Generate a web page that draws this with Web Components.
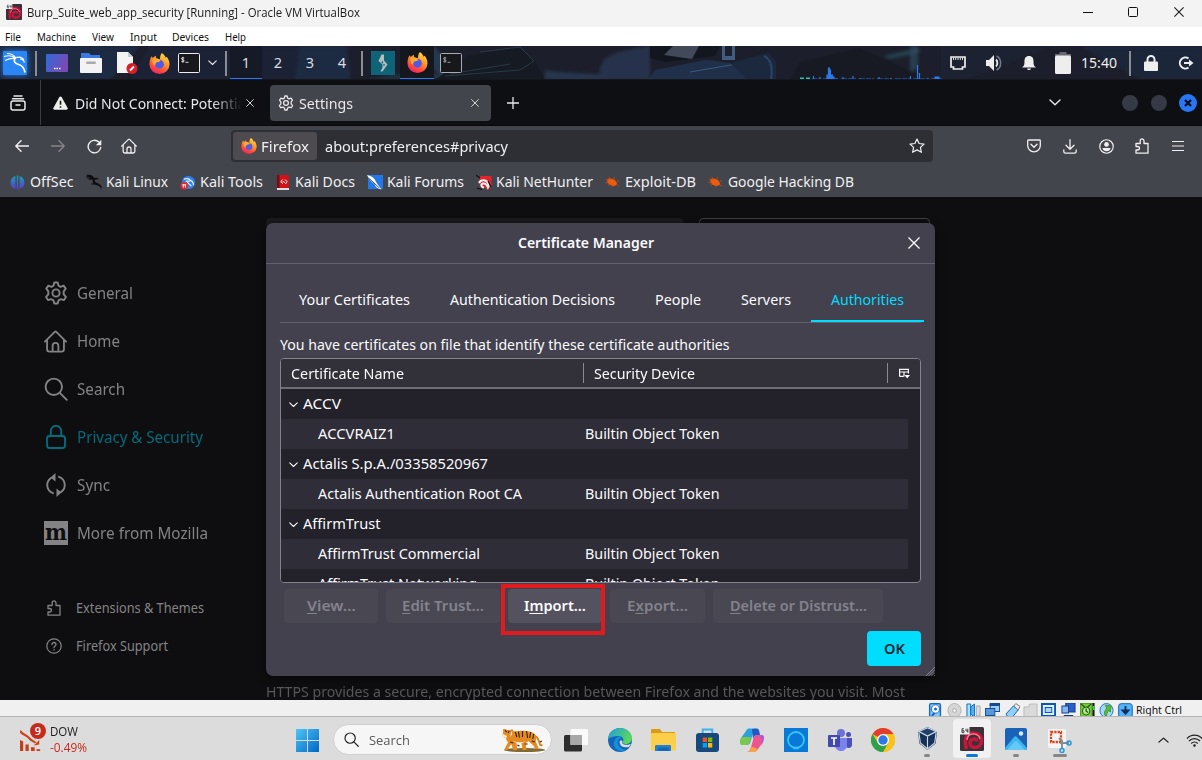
<!DOCTYPE html>
<html lang="en">
<head>
<meta charset="utf-8">
<title>Burp_Suite_web_app_security [Running] - Oracle VM VirtualBox</title>
<style>
html,body{margin:0;height:100%;overflow:hidden;background:#0e0e10}
body{width:1202px;height:760px;font-family:"Noto Sans","Open Sans",sans-serif;font-size:15px}
</style>
</head>
<body>
<vm-window></vm-window>
<script>
const define = (tag, css, html) => {
  const t = document.createElement('template');
  t.innerHTML = `<style>*{box-sizing:border-box}:host{display:block;box-sizing:border-box}${css}</style>${html}`;
  customElements.define(tag, class extends HTMLElement {
    constructor(){ super(); this.attachShadow({mode:'open'}).append(t.content.cloneNode(true)); }
  });
};

/* Text run set to a given measure; --dy nudges its baseline. */
customElements.define('fit-text', class extends HTMLElement {
  constructor(){
    super();
    this.attachShadow({mode:'open'}).innerHTML =
      '<style>:host{display:block;white-space:nowrap;flex:none}span{display:inline-block;transform-origin:0 50%}</style><span><slot></slot></span>';
  }
  connectedCallback(){
    const w = parseFloat(this.getAttribute('w'));
    const s = this.shadowRoot.querySelector('span');
    this.style.width = w + 'px';
    const n = s.getBoundingClientRect().width;
    if (n) s.style.transform = `translateY(var(--dy,0px)) scaleX(${(w / n).toFixed(4)})`;
  }
});

const st = 'fill="none" stroke="currentColor" stroke-linecap="round" stroke-linejoin="round"';
const ICONS = {
 vmlogo:['0 0 24 24','<rect width="24" height="24" rx="1.5" fill="#3a3238"/><path d="M6.500 22C3.500 12 6.500 6 13 6c5.500 0 8.500 3.500 8.500 7.500 0 4.500-3 7-6.500 7-3.500 0-5-2.200-5-4.500 0-2.500 2-4 4-4 1.800 0 2.800 1 2.800 2.500" fill="none" stroke="#c8153c" stroke-width="3.600"/><path d="M7 13c.5-4.500 3-6.500 7-6 3 .3 5.500 2.500 6 5" fill="none" stroke="#ff6d88" stroke-width="1.500"/><rect width="9.500" height="7.500" fill="#f2f2f2"/><path d="M3.800 1.700H2v4h2v-2H2M6 1.700v2.300h2.200M7.800 1.700v4" stroke="#333" fill="none" stroke-width=".9"/>'],
 min:['0 0 10 10','<path d="M0 5.500h10" stroke="#111"/>'],
 max:['0 0 10 10','<rect x=".5" y=".5" width="9" height="9" rx="1" fill="none" stroke="#111"/>'],
 close:['0 0 10 10','<path d="M.4.4l9.200 9.200M9.600.4L.4 9.600" stroke="currentColor" stroke-width="1.100" fill="none"/>'],
 kali:['0 0 24 24','<rect width="24" height="24" rx="1" fill="#2a86f5"/><path d="M1 5.500c4-1.200 8-1 11 1.500M2 9.500c4-2 7-2.500 10-2M4 2.500c4 0 7 1.500 9 4.500M12 7c4-1.500 7.500-.5 9 2.500M17 8c2 0 3.500 1 4.500 3.500" fill="none" stroke="#fff" stroke-width="1.200"/><path d="M12.500 6.500c-2.500 3.500-1 6 3 7 3.500.8 5.500 3 6.500 8" fill="none" stroke="#fff" stroke-width="1.700"/>'],
 desk:['0 0 22 18','<defs><linearGradient id="a" x2="1" y2=".4"><stop stop-color="#2f6bd8"/><stop offset="1" stop-color="#7a4ab5"/></linearGradient></defs><rect width="22" height="18" rx="1" fill="url(#a)"/><path d="M8 14.500h1.500M10.500 14.500h1.500M13 14.500h1.500" stroke="#fff" stroke-width="1.500"/>'],
 folder:['0 0 22 20','<path d="M1 0h8l2 2h9v7H1z" fill="#3b78e0"/><rect y="5" width="22" height="15" rx="1" fill="#f3f3f3"/><rect x="6" y="8.500" width="10" height="2.500" rx="1.200" fill="#aaa"/>'],
 doc:['0 0 21 22','<path d="M0 0h11l5 5v16H0z" fill="#f4f4f4"/><path d="M11 0v5h5" fill="#ccc"/><circle cx="15" cy="16.500" r="5.500" fill="#d3202a"/><path d="M13 18.500l4-4" stroke="#fff" stroke-width="1.800"/>'],
 firefox:['0 0 22 22','<defs><linearGradient id="f" x1=".8" y1="0" x2=".3" y2="1"><stop stop-color="#ffe14a"/><stop offset=".4" stop-color="#ff9a28"/><stop offset=".75" stop-color="#ff4a3a"/><stop offset="1" stop-color="#e8206e"/></linearGradient></defs><path d="M13.500 0c2.500 1.500 3.500 3.500 3.800 5l1.200-1c2 2.500 3 5 3 8a10.500 10 0 0 1-21 0C.5 8 1.500 5 3 3.500l1 2C5 4 6 4 7 3l.5 2.500 4 1C11.500 4 12 1.500 13.500 0z" fill="url(#f)"/><circle cx="11" cy="11.800" r="4.600" fill="#4f5be6"/><path d="M4 6.500c3-1.500 6-1 8 1.500-1 1.500-3 1-4.500 2-1.500 1.300-.5 3.500-2 3-2-1.500-2-4.500-1.500-6.500z" fill="#ffab30"/>'],
 term:['0 0 22 20','<rect x=".5" y=".5" width="21" height="19" rx="1" fill="#17181c" stroke="currentColor"/><path d="M6.200 5.200c-1.500-.9-2.700-.4-2.700.5 0 1.400 2.700.9 2.700 2.200 0 1-1.600 1.200-2.800.5M4.900 3.800v5.800M7.500 9.300h3" fill="none" stroke="currentColor" stroke-width=".9"/>'],
 chev:['0 0 12 7',`<path d="M1 1l5 4.700L11 1" ${st} stroke-width="1.400"/>`],
 burp:['0 0 24 24','<rect width="24" height="24" fill="#0f6477"/><path d="M10.500 3.500h2.500v6l3.500 4-5 7H9.500l2-4v-3L7.500 10z" fill="#b4bdc0"/><path d="M11 9.500l1.500 2.500-2 .5zM13 15.500l-1-2 2-.5z" fill="#0f6477"/>'],
 eth:['0 0 16 14','<path d="M1 1h14v10h-2.500v2h-9v-2H1z" fill="none" stroke="#eee" stroke-width="1.700"/><path d="M3.500 1v3M5.700 1v3M8 1v3M10.300 1v3M12.500 1v3" stroke="#ddd"/>'],
 vol:['0 0 18 18','<path d="M1 6h3l5-5v16l-5-5H1z" fill="#eee"/><path d="M11 5.500c1.800 1.500 1.800 5.500 0 7" stroke="#eee" fill="none" stroke-width="1.800"/><path d="M11.500 2c5.500 2.500 5.500 11.500 0 14" stroke="#777b84" fill="none" stroke-width="1.500"/>'],
 bell:['0 0 14 16','<path d="M7 1c3.500 0 4.500 2.500 4.500 5 0 4 .5 5 2.500 6.500H0C2 11 2.500 10 2.500 6c0-2.500 1-5 4.500-5zM5 13.500h4c-.5 2-3.500 2-4 0z" fill="#eee"/>'],
 batt:['0 0 16 22','<path d="M4.500 0h7v2H16v2H0V2h4.500z" fill="#666a72"/><rect y="3.500" width="16" height="18.500" rx="1.500" fill="#eee"/>'],
 lock:['0 0 14 16','<rect y="6.500" width="14" height="9.500" rx="1" fill="#eee"/><path d="M3.500 7V4.500a3.500 3.500 0 0 1 7 0V7" fill="none" stroke="#eee" stroke-width="2"/>'],
 logout:['0 0 16 14','<path d="M10.500 2.500A5.500 5.500 0 1 0 10.500 11.500M6 7h7" fill="none" stroke="#eee" stroke-width="2"/><path d="M11 3.500L15.500 7 11 10.500z" fill="#eee"/>'],
 graph:['0 0 142 16','<path d="M0 14.500h4M6 14.500h4" stroke="#20c8b8" stroke-width="2"/><path d="M12 15h130" stroke="#2a6ee0" stroke-width="1" stroke-dasharray="5 1 2 3 6 1"/><path d="M13.500 16v-4M20 16v-3M27 16v-5h1.500V4h1v2h1v5h2v2h1.500v3zM36 16v-2M43 16v-3M53 16v-4M60 16v-2M79 16v-3M91 16v-2M110.500 16v-4M117.500 16V1M119.500 16V9M128 16v-2M135 16v-3h4v3" stroke="#2a7bea" fill="#2a7bea" stroke-width="1.200"/>'],
 box:['0 0 16 16',`<path d="M4 1h8M2.500 3.700h11" ${st} stroke-width="1.500"/><rect x="1" y="6" width="14" height="9" rx="2" ${st} stroke-width="1.500"/><path d="M6 10h4" ${st} stroke-width="1.500"/>`],
 warn:['0 0 16 15','<path d="M8 .5c.6 0 1 .3 1.300.8l6.300 11.500c.5 1-.1 1.900-1.200 1.900H1.600C.5 14.700-.1 13.800.4 12.800L6.700 1.300C7 .8 7.400.5 8 .5z" fill="#eee"/><path d="M8 5v4.500M8 11v1.600" stroke="#15161a" stroke-width="1.700"/>'],
 gear:['0 0 24 24',`<path d="M10.300 1.500h3.400l.8 3.200 2 1.100 3.100-1.200 2.100 3-2 2.800v2.900l2.200 2.600-1.900 3.200-3.400-.9-2.100 1.200-.8 3.100h-3.400l-.8-3.100-2.100-1.200-3.400.9-1.900-3.200 2.200-2.600v-2.900l-2-2.800 2.100-3 3.100 1.200 2-1.100z" ${st} stroke-width="1.900"/><circle cx="12" cy="12" r="3.600" ${st} stroke-width="1.900"/>`],
 plus:['0 0 12 12','<path d="M6 0v12M0 6h12" stroke="currentColor" stroke-width="1.300"/>'],
 back:['0 0 14 12',`<path d="M13.500 6H1M6 .8L.8 6 6 11.200" ${st} stroke-width="1.400"/>`],
 fwd:['0 0 14 12',`<path d="M.5 6H13M8 .8L13.200 6 8 11.200" ${st} stroke-width="1.400"/>`],
 reload:['0 0 15 15',`<path d="M13.700 8.500A6.300 6.300 0 1 1 11.800 3" ${st} stroke-width="1.400"/><path d="M14.300.8v5.500H8.800z" fill="currentColor"/>`],
 home:['0 0 24 24',`<path d="M1 12.200L11.200 2c.5-.5 1.100-.5 1.600 0L23 12.200M3.200 10.500V20c0 1.600.8 2.500 2.500 2.500h12.600c1.700 0 2.500-.9 2.500-2.500v-9.500M9 22v-5.500c0-4 6-4 6 0V22" ${st} stroke-width="1.900"/>`],
 star:['0 0 16 16',`<path d="M8 1l2.100 4.500 4.900.6-3.600 3.300 1 4.900L8 11.900l-4.400 2.400 1-4.900L1 6.100l4.900-.6z" ${st} stroke-width="1.200"/>`],
 pocket:['0 0 14 14',`<path d="M1.500 1h11c.5 0 .8.300.8.800V6.500a6.300 6.300 0 0 1-12.600 0V1.800c0-.5.300-.8.800-.8z" ${st} stroke-width="1.300"/><path d="M4 5.300l3 2.900 3-2.900" ${st} stroke-width="1.400"/>`],
 down:['0 0 14 15',`<path d="M7 .7v9M3 6.200l4 4 4-4M.8 11v1.500c0 1 .6 1.700 1.700 1.700h9c1.100 0 1.700-.7 1.700-1.700V11" ${st} stroke-width="1.300"/>`],
 account:['0 0 16 16','<circle cx="8" cy="8" r="7.200" fill="none" stroke="currentColor" stroke-width="1.300"/><circle cx="8" cy="5.800" r="2.500" fill="currentColor"/><path d="M3.800 9.500h8.400c0 2-1.500 3.500-4.200 3.500S3.800 11.500 3.800 9.500z" fill="currentColor"/>'],
 puzzle:['0 0 14 16',`<path d="M1 15.200h12V5.500H9V3c0-2.800-3.800-2.800-3.800 0v2.500H1v3h1.500c2.600 0 2.600 3.500 0 3.500H1z" ${st} stroke-width="1.300"/>`],
 menu:['0 0 12 12','<path d="M0 1.500h12M0 6h12M0 10.500h12" stroke="currentColor" stroke-width="1.200"/>'],
 offsec:['0 0 16 16','<defs><linearGradient id="o" x2="0" y2="1"><stop stop-color="#18a0b0"/><stop offset="1" stop-color="#5a3bd6"/></linearGradient></defs><path d="M5.800 1v13.800A7.200 7.200 0 0 1 5.800 1zM10.200 1v13.800A7.200 7.200 0 0 0 10.200 1zM7.200.5h1.600v15H7.200z" fill="url(#o)"/>'],
 dragon:['0 0 16 16','<path d="M0 1c4-1 7 0 8 3 2-.8 4-.3 5 1.500-2-.5-3.500-.3-4.500.8.3 2.200 2 2.300 4 3.200 2 1 3 3 3 6-1.500-3-3-4-5-4.500C7 10.500 6 8 7 5.500L2 6l3-2z" fill="#0c0c0e"/><path d="M1 4h5M0 2.500l6 1M5 10h4M13 11l3 2" stroke="#0c0c0e" stroke-width=".9"/>'],
 tools:['0 0 16 16','<circle cx="9" cy="8" r="7" fill="#2d82ee"/><path d="M4 4.500c4-1.500 6-.5 7.500 1.500 2 .5 2.500 2 3 5M6 7c2-1 4 0 5-1M8 7c0 3 3 2.500 4 5" fill="none" stroke="#e9f2ff" stroke-width="1.200"/><circle cx="4.500" cy="11.500" r="4" fill="#e02a36"/><path d="M3.500 9.800v3.500M5.700 9.800v3.500M2.500 10.500h4" stroke="#fff" fill="none"/>'],
 docs:['0 0 12 15','<rect width="12" height="13" rx="1" fill="#d11218"/><rect y="0" width="2.500" height="13" fill="#7c0b12"/><rect y="13" width="12" height="2" fill="#e3dfdf"/><path d="M5.500 4.500L3.800 7 6 8.500M8 4.500L10 6.500 8.500 9M5.800 6.500l2 .8" stroke="#fff" fill="none"/>'],
 forums:['0 0 16 15','<rect x="1" width="15" height="14" fill="#2278ea"/><path d="M0 0c5 1 8 3.500 9 7l5.500 7.500c-4-1-6-2.500-7-5.500C4 7 2 4 0 0z" fill="#fff"/><path d="M1.500 3l11 10" stroke="#333" stroke-width=".9"/>'],
 nethunter:['0 0 16 15','<path d="M4 1h11.500v10L12 15 3 9z" fill="#e4222e"/><path d="M3 8c2-4 8-3.500 9.500 1 .5 1.500.2 2.500-.5 3.500-1-3-3-4.500-5.500-4C4.500 9.500 5 12 8 12.500" fill="none" stroke="#f2f2f2" stroke-width="2"/><path d="M0 0l4 3M1 13l5 1.500M12 6l3 6" stroke="#111" stroke-width="1.200"/>'],
 bug:['0 0 16 12','<ellipse cx="7.500" cy="6.200" rx="5.500" ry="3.300" transform="rotate(22 7.500 6.200)" fill="#ee5a0e"/><path d="M1 3l3 1.500M4 .8l2 3M10 1l-.5 3M13 5h2M12 8.500l3 1.500M3 10l2-2M0 6.500l4 .5M8 11V9" stroke="#c5500f" stroke-width=".8"/>'],
 search:['0 0 24 24',`<circle cx="9.800" cy="9.800" r="8.200" ${st} stroke-width="1.900"/><path d="M15.800 15.800l7 7" ${st} stroke-width="1.900"/>`],
 padlock:['0 0 24 24',`<rect x="3" y="11" width="18" height="12" rx="2.500" ${st} stroke-width="1.900"/><path d="M6.800 11V6a5.200 5.200 0 0 1 10.400 0v5" ${st} stroke-width="1.900"/>`],
 sync:['0 0 24 24',`<path d="M9 20.200A8.600 8.600 0 0 1 7 5M15 3.800A8.600 8.600 0 0 1 17 19" ${st} stroke-width="1.900"/><path d="M11.500 0v8.500L6.500 4.500zM12.500 15.500v8.500l5-4.500z" fill="currentColor"/><path d="M10 4.300c2-.6 3.500-.6 5-.3M14 19.700c-2 .6-3.500.6-5 .3" ${st} stroke-width="1.500" opacity="0"/>`],
 help:['0 0 16 16',`<circle cx="8" cy="8" r="7.200" ${st} stroke-width="1.200"/><path d="M6 6.500c0-2.700 4-2.600 4 0 0 1.500-2 1.500-2 3.200M8 11.700v.2" ${st} stroke-width="1.300"/>`],
 cols:['0 0 11 11','<path d="M.6 8.400v-7h8.800v4M.6 4h8.800M5 4v4.400M.6 8.400h3.900" fill="none" stroke="#fbfbfe" stroke-width="1.200"/><path d="M5.500 7h5.500L8.200 10.500z" fill="#fbfbfe"/>'],
 grip:['0 0 10 10','<path d="M0 10L10 0M3 10L10 3M6 10L10 6M9 10L10 9" stroke="#8e8d97"/>'],
 s1:['0 0 16 14','<rect x="1" y="0" width="13" height="15" rx="2" fill="#1269c8"/><rect x="2.500" y="1.200" width="10" height="13" rx="1" fill="#8dc9f7"/><circle cx="8" cy="6" r="4.200" fill="#fff" stroke="#1269c8"/><circle cx="8" cy="6" r="1.600" fill="#1269c8"/><path d="M4 13l3-3" stroke="#1269c8" stroke-width="2"/>'],
 s2:['0 0 16 14','<circle cx="8" cy="7.500" r="7" fill="#d6d6d6" stroke="#b3b3b3"/><circle cx="8" cy="7.500" r="2" fill="#f2f2f2" stroke="#aaa"/>'],
 s3:['0 0 16 14','<path d="M1 1h4v13H1z" fill="#a5e3ff" stroke="#1269c8"/><path d="M5 4l4-3v13l-4-3z" fill="#4db5f5" stroke="#1269c8"/><path d="M11 3h4v10h-4z" fill="#ddd" stroke="#aaa"/>'],
 s4:['0 0 16 14','<rect x="5.500" y=".5" width="10" height="8" fill="#9ccff5" stroke="#174a91"/><path d="M5 2h11" stroke="#174a91" stroke-width="2"/><rect x=".5" y="5.500" width="10" height="7" fill="#5797de" stroke="#174a91"/><path d="M3 13.500h6" stroke="#174a91"/>'],
 s5:['0 0 16 14','<path d="M9 3l5 4-6 7H3l-2-3z" fill="#8ed0fa" stroke="#1b5faa"/><path d="M9.500 3l2-2.500 4.500 3L14 7z" fill="#eee" stroke="#777"/>'],
 s6:['0 0 16 14','<path d="M1 4h5l1-3h8v13H1z" fill="#dadada" stroke="#bbb"/>'],
 s7:['0 0 16 14','<rect x="1" y="1" width="14" height="12" fill="#dff0ff" stroke="#0d55b0" stroke-width="2"/><rect x="4.500" y="4.500" width="7" height="5" fill="#a9d8fb" stroke="#0d55b0"/>'],
 s8:['0 0 16 14','<rect x="5" y="0" width="10" height="9" fill="#2d5fc9" stroke="#153c8c"/><rect x="1" y="3" width="7" height="7" fill="#8ab6ee" stroke="#153c8c"/><path d="M3 13h10" stroke="#153c8c" stroke-width="2"/>'],
 s9:['0 0 16 14','<rect width="13" height="14" fill="#7cc53e" stroke="#267a1c"/><circle cx="6.500" cy="8" r="4" fill="#b5e58a" stroke="#175910"/><path d="M1 1l4 3M12 1L8 4M6.500 5.500V8l2 1.500" stroke="#175910" fill="none" stroke-width="1.300"/><path d="M14.500 0v14" stroke="#111" stroke-width="2"/><path d="M14.500 3v4" stroke="#3dd33d" stroke-width="2"/>'],
 s10:['0 0 16 14','<circle cx="8" cy="7.500" r="7" fill="#a5d7f7" stroke="#2176c3"/><path d="M7 2l6 1-1 6-2-1.500c-1 2-2 3.500-2 6.500-3-2-3-5 0-8.500z" fill="#5bbb30" stroke="#2b8520" stroke-width=".7"/>'],
 s11:['0 0 16 14','<rect x=".7" y=".7" width="14.500" height="14" rx="2.500" fill="#56b3f5" stroke="#1261b8"/><path d="M8 3v6M5 7.500L8 10.500 11 7.500z" stroke="#0b2f63" fill="#0b2f63" stroke-width="2"/>'],
 stocks:['0 0 24 24','<path d="M0 2c3 5 7 4 10 8 2 3 5 3 7 5" fill="none" stroke="#cf4014" stroke-width="2.300"/><path d="M21 12v5l-6 1z" fill="#cf4014"/><path d="M0 12l3.500 1.500V24H0zM6 17h3.500v7H6zM12 20h4v4h-4zM18 22h4v2h-4z" fill="#c63d17"/>'],
 win:['0 0 24 24','<defs><linearGradient id="w" x2="1" y2="1"><stop stop-color="#4cc6f8"/><stop offset="1" stop-color="#0067c4"/></linearGradient></defs><path d="M0 0h11.500v11.500H0zM12.500 0H24v11.500H12.500zM0 12.500h11.500V24H0zM12.500 12.500H24V24H12.500z" fill="url(#w)"/>'],
 tiger:['0 0 44 25','<ellipse cx="24" cy="23" rx="20" ry="2" fill="#7f6b35"/><path d="M33 9c3 0 4 2 5 5s1 5 3.500 4" fill="none" stroke="#d97c1a" stroke-width="1.800"/><path d="M3 2l2 0 2 1h3l2-1 1 2c4 1 7-1 12 0 5 .5 9 1.500 10 5 1 3-1 5 1 8l2 5h-4c0-4-4-5-6-8l-3 2 1 7h-4l-1-7-5-1 1 8h-4l-2-6-4 6H4l4-8c-2-1-2-3-2-4-3 0-4-3-3-5z" fill="#e58a20"/><path d="M3 7l4 2-1 2-3-1zM12 14l7 1.500 6-1-6 2.500zM11 4l1 3-2 3z" fill="#fff0d6"/><path d="M15 5l1.500 5M18 4.500l1 6M22 4v6M26 4l1 7M30 5l-1 6M33 7l-1 5M10 15l3 1M5 3.500l1.500 1.500M9 4l-1 2M17 18l2 1M39 15l2-1M31 14l3 1M24 17h3" stroke="#33220f" stroke-width="1.100"/>'],
 taskview:['0 0 24 23','<rect x="0" y="6" width="18" height="16.500" rx="1.500" fill="#2d2d2d"/><rect x="6.500" y="0" width="17.500" height="16" rx="1" fill="#fafafa"/><path d="M6.500 6H18v10H6.500z" fill="#a8a8a8"/>'],
 edge:['0 0 24 24','<defs><linearGradient id="e" x2="1" y2=".5"><stop stop-color="#1b9de2"/><stop offset="1" stop-color="#5cd95b"/></linearGradient></defs><circle cx="12" cy="12" r="12" fill="#1266ba"/><path d="M0 12C0 5 5.500 0 12 0s12 4.500 12 10c0 4-3 6-6.500 6-2 0-3.500-.8-2.500-2 1.500-3-1-6-4-6C6 8 1 9 0 12z" fill="url(#e)"/><path d="M12 8c-4 1-6 4-6 8 0 5 6 9 12 6-5-1-9-4-8-9 .3-1.500 1-2.300 3-3z" fill="#1a8ed6"/><path d="M14.500 14c-1.500 2 3 4 8 2l.500 0-2 3c-4 1-9 0-9.500-5 0-1 1-2 3-1z" fill="#dcdcdc"/>'],
 wfolder:['0 0 25 22','<path d="M0 1c0-.6.400-1 1-1h8l2 3h13v6H0z" fill="#dc9a18"/><rect y="4" width="25" height="17.500" rx="1" fill="#fdce49"/><path d="M4 22v-4.500c0-1 .6-1.500 1.500-1.500h13c1 0 1.500.5 1.500 1.500V22h-3v-2H7v2z" fill="#2380d0"/><path d="M7 18.500h11V22H7z" fill="#1468b3"/>'],
 store:['0 0 24 24','<path d="M7 6V1.500h10V6" fill="none" stroke="#3db1ea" stroke-width="2"/><rect y="5" width="24" height="19" rx="3" fill="#17497f"/><path d="M7 9.500h4.500V14H7z" fill="#f05023"/><path d="M12.500 9.500H17V14h-4.500z" fill="#7fbb00"/><path d="M7 15h4.500v4.500H7z" fill="#00a5ef"/><path d="M12.500 15H17v4.500h-4.500z" fill="#ffb902"/>'],
 copilot:['0 0 24 24','<path d="M6 3c1-2 2-2.500 4-2.500h7c-3 0-3.500 3-4.500 6L11 12c-1 4-2 5-5 5H3c-4 0-3-4-2-7z" fill="#2aa0dc"/><path d="M3 9h8l-1 4c-1 3-2 4-4 4H3c-4 0-3-4-2-7z" fill="#7cc84a"/><path d="M18 21c-1 2-2 2.500-4 2.500H7c3 0 3.500-3 4.500-6L13 12c1-4 2-5 5-5h3c4 0 3 4 2 7z" fill="#f0548c"/><path d="M18 21c-1 2-2 2.500-4 2.500H7c3 0 3.500-3 4-5z" fill="#f7a63c"/><path d="M12 1l5-.5c2 0 2.500 3 3 6.500h-3c-2 0-3 1-4 4z" fill="#2458c8"/><path d="M21 7c4 0 3 4 2 7l-2 4c1-5 1-8-2-11z" fill="#a85be0"/>'],
 cortana:['0 0 24 24','<rect width="24" height="24" fill="#0a78d6"/><circle cx="12" cy="12" r="8" fill="none" stroke="#35c6f6" stroke-width="1.800"/><path d="M9.500 20h5" stroke="#35c6f6" stroke-width="2.500"/>'],
 teams:['0 0 24 24','<circle cx="13" cy="5" r="4" fill="#6c72d9"/><circle cx="20.500" cy="6.500" r="2.500" fill="#4a50b5"/><path d="M17 10h7v7c0 3-4 4-6 2z" fill="#4a50b5"/><path d="M7 10h12v7c0 8-12 8-12 0z" fill="#7b83eb"/><rect y="7" width="12" height="12" rx="1" fill="#434aae"/><path d="M3 10h6M6 10v7" stroke="#fff" stroke-width="1.700"/>'],
 chrome:['0 0 24 24','<circle cx="12" cy="12" r="12" fill="#fbc116"/><path d="M12 12L1.600 6A12 12 0 0 1 22.400 6z" fill="#e33b2e"/><path d="M12 6h10.400A12 12 0 0 1 12 24l5-9z" fill="#fbc116"/><path d="M1.600 6A12 12 0 0 0 12 24l5.200-9-5.200 2-5-2z" fill="#2da04e"/><circle cx="12" cy="12" r="6" fill="#fff"/><circle cx="12" cy="12" r="4.700" fill="#2f76e6"/>'],
 vbox:['0 0 22 24','<path d="M11 0l10 4.500-1.500 12L11 23l-8.500-6.500L1 4.500z" fill="#16325a"/><path d="M11 .8l9 3.700L11 9 2 4.500z" fill="#223f6c" stroke="#d5dfec" stroke-width="1.200"/><path d="M11 9.500V22M2 5.500l1.500 10.500L11 22l7.500-6L20 5.500" stroke="#cddae8" fill="none" stroke-width="1.200"/>'],
 photos:['0 0 22 22','<rect width="22" height="22" rx="2" fill="#1a62b8"/><circle cx="16" cy="5.500" r="2.200" fill="#d8edff"/><path d="M0 20L9 9c1-1 2-1 3 0l10 11c0 1-1 2-2 2H2c-1 0-2-1-2-2z" fill="#3cb6ec"/><path d="M2 22L10 13.500c.7-.7 1.300-.7 2 0L20 22z" fill="#64c9f5"/>'],
 snip:['0 0 24 24','<rect width="18" height="19" rx="2" fill="#f4f4f4"/><rect x="3" y="3" width="10" height="10" fill="none" stroke="#d9441a" stroke-width="2.300" stroke-dasharray="2.300 1"/><path d="M11 9l3 3v8M12 14h9" stroke="#8b8d92" stroke-width="2" fill="none"/><circle cx="14" cy="21.500" r="2" fill="none" stroke="#1e9ae0" stroke-width="1.500"/><circle cx="21" cy="14" r="2" fill="none" stroke="#1e9ae0" stroke-width="1.500"/>'],
 wifi:['0 0 17 13','<path d="M1 4.500c4-4.500 11-4.500 15 0M3 7c3-3.300 8-3.300 11 0M5.200 9.500c2-2 4.600-2 6.600 0" fill="none" stroke="#222" stroke-width="1.200"/><circle cx="8.500" cy="11.500" r="1.300" fill="#222"/>']
};
customElements.define('k-icon', class extends HTMLElement {
  connectedCallback(){
    const [vb, body] = ICONS[this.getAttribute('n')];
    const w = this.getAttribute('w'), h = this.getAttribute('h') || w;
    this.attachShadow({mode:'open'}).innerHTML =
      `<style>:host{display:block;flex:none;width:${w}px;height:${h}px}svg{display:block}</style><svg width="${w}" height="${h}" viewBox="${vb}" preserveAspectRatio="none">${body}</svg>`;
  }
});

define('vm-titlebar', `:host{height:27px;background:#f3f3f3;color:#1b1b1b;font:12px "Open Sans","Noto Sans",sans-serif}
 div{display:grid;height:24px;grid-template-columns:21px 1056px 45px 46px 10px;padding-left:6px;align-items:center}`,
 `<div><k-icon n="vmlogo" w="16"></k-icon><fit-text w="333">Burp_Suite_web_app_security [Running] - Oracle VM VirtualBox</fit-text><k-icon n="min" w="10"></k-icon><k-icon n="max" w="10"></k-icon><k-icon n="close" w="10"></k-icon></div>`);

define('vm-menubar', `:host{height:19px;background:#fff;color:#111;font:11.500px "Noto Sans",sans-serif;--dy:-1px}
 div{display:grid;height:20px;grid-template-columns:32px 55px 38px 42px 53px 30px;padding-left:5px;align-items:center}`,
 `<div><fit-text w="16">File</fit-text><fit-text w="39">Machine</fit-text><fit-text w="22">View</fit-text><fit-text w="27">Input</fit-text><fit-text w="37">Devices</fit-text><fit-text w="21">Help</fit-text></div>`);

define('kali-panel', `:host{height:34px;position:relative;background:#1c1f2b;color:#eee;overflow:hidden;border-bottom:1px solid #16171c}
 .wall{position:absolute;inset:0}
 .row{position:relative;display:grid;height:34px;align-items:center;padding-left:3px;
  grid-template-columns:32px 11px 34px 37px 32px 29px 30px 17px 5px 32px 32px 32px 36px 9px 29px 40px 360px 151px 35px 36px 33px 26px 49px 14px 35px 20px}
 i{display:block;width:2px;height:25px;background:#8b8d93}
 .ws{width:32px;height:34px;display:flex;justify-content:center;align-items:center;font:14.500px "Noto Sans",sans-serif;--dy:-1px;padding-bottom:2px;color:#dcdde0}
 .on{background:#161a27;border-bottom:2px solid #2a78f5;padding:0;height:34px}
 .task{width:34px;height:34px;background:#15171e;border-bottom:2px solid #2a78f5;display:flex;align-items:center;justify-content:center}
 .glow{filter:drop-shadow(0 0 3px #2a7cf0)}`,
 `<svg class="wall" width="1202" height="34" viewBox="0 0 1202 34"><defs><filter id="b" x="-5%" width="110%" y="-20%" height="140%"><feGaussianBlur stdDeviation="1.500"/></filter></defs><rect width="1202" height="34" fill="#1c1f2b"/>
 <g filter="url(#b)"><path d="M0 0h140l-30 34H0z" fill="#1f2a42"/><path d="M150 0h200l-10 34H130z" fill="#1c2435"/><path d="M300 0h45q5 15 5 34h-55z" fill="#1f2b43"/><path d="M365 34l60-10 30 10z" fill="#223344"/>
 <path d="M412 0h22l20 24-10 10z" fill="#2a4262" opacity=".7"/></g><path d="M468 10l50-9 17 14 10 19H435z" fill="#161a22"/><path d="M480 6l40-5 14 14-14 9-75 6M450 28l60-10" fill="none" stroke="#2b4350" stroke-width=".8"/>
 <g filter="url(#b)"><path d="M545 24q8 3 100 6v4h-100z" fill="#2c4566" opacity=".6"/><path d="M600 34V22q4-14 28-18l22-4v34z" fill="#27324c"/></g><path d="M650 0h70l-5 10-50 6-15-4z" fill="#12161f"/><path d="M673 0h26l-7 13-28-4z" fill="#424a59"/>
 <path d="M655 24l50-10q50 4 60 20H648z" fill="#20304a"/><path d="M690 26l70-12" stroke="#3c5a7c"/><path d="M722 0h3v10h7V0h3v14h-13z" fill="#405d80"/><path d="M730 17l38-10 8 8v19h-28z" fill="#1b283e"/><path d="M764 10q10 4 7 24" fill="none" stroke="#2d4565" stroke-width="2"/><path d="M790 34l10-18 60-14 70 32z" fill="#181a23"/>
 <g filter="url(#b)"><path d="M884 10l20-5 15-3v5l-30 6z" fill="#24404e"/><path d="M910 0h8v22l-8 4z" fill="#304860" opacity=".7"/><path d="M942 0h110l-90 34h-20z" fill="#1d2433"/><path d="M1080 0h122v34h-60z" fill="#1d273b"/></g></svg>
 <div class="row"><k-icon class="glow" n="kali" w="24"></k-icon><i></i><k-icon n="desk" w="22" h="18"></k-icon><k-icon n="folder" w="22" h="20"></k-icon><k-icon n="doc" w="21" h="22"></k-icon><k-icon n="firefox" w="21"></k-icon><k-icon n="term" w="22" h="20"></k-icon><k-icon n="chev" w="9" h="5.500"></k-icon><i></i><div class="ws on">1</div><div class="ws">2</div><div class="ws">3</div><div class="ws">4</div><i style="margin-left:-1px"></i><k-icon n="burp" w="24"></k-icon><div class="task"><k-icon n="firefox" w="21"></k-icon></div><k-icon n="term" w="22" h="20" style="color:#aaa"></k-icon><k-icon n="graph" w="142" h="16" style="align-self:end"></k-icon><k-icon n="eth" w="16" h="14" style="margin-left:-1px"></k-icon><k-icon n="vol" w="18" style="margin-left:-1px"></k-icon><k-icon n="bell" w="14" h="16"></k-icon><k-icon n="batt" w="16" h="22"></k-icon><fit-text w="36" style="--dy:-1px">15:40</fit-text><i style="margin-left:-1px"></i><k-icon n="lock" w="14" h="16"></k-icon><k-icon n="logout" w="16" h="14" style="margin-left:-1px"></k-icon></div>`);

define('ff-tabs', `:host{height:46px;background:#0e0f12;color:#e9e9ec;border-bottom:1px solid #08080a}
 .row{display:flex;height:45px;align-items:center}
 .div{width:1px;height:45px;background:#3b3c40;margin:0 13px 0 14px}
 .fade{width:167px;overflow:hidden;margin-left:6px;-webkit-mask-image:linear-gradient(90deg,#000 138px,transparent 168px)}
 .tab{display:flex;align-items:center;width:221px;height:36px;border-radius:4px;background:#43454c;margin:0 16px;padding:0 12px 0 8px}
 .c{width:16px;height:16px;border-radius:50%;background:#353a46;margin-right:13px}
 .x{width:18px;height:18px;border-radius:50%;background:#2676f5;display:flex;align-items:center;justify-content:center;color:#050a18}`,
 `<div class="row"><k-icon n="box" w="16" style="margin-left:10px"></k-icon><div class="div"></div><k-icon n="warn" w="15" h="14" style="margin-left:-1px"></k-icon><div class="fade"><fit-text w="174" style="margin-left:1px">Did Not Connect: Potential</fit-text></div><k-icon n="close" w="8" style="margin-left:5px"></k-icon>
 <div class="tab"><k-icon n="gear" w="16"></k-icon><fit-text w="54" style="margin:0 auto 0 5px">Settings</fit-text><k-icon n="close" w="8"></k-icon></div><k-icon n="plus" w="12"></k-icon><k-icon n="chev" w="12" h="7" style="margin:0 61px 0 530px"></k-icon><div class="c"></div><div class="c" style="margin-right:12px"></div><div class="x"><svg width="8" height="8" viewBox="0 0 8 8"><path d="M1 1l6 6M7 1L1 7" stroke="currentColor" stroke-width="2.200"/></svg></div></div>`);

define('ff-toolbar', `:host{height:40px;background:#43454c;color:#f0f0f2}
 .row{display:grid;height:40px;align-items:center;padding-left:15px;grid-template-columns:36px 36px 35px 109px 796px 36px 36px 37px 36px 12px}
 .url{display:flex;align-items:center;width:702px;height:32px;border-radius:4px;background:#2e2f34;padding:2px}
 .chip{display:flex;align-items:center;gap:4px;width:84px;height:28px;border-radius:3px;background:#4d4b50;padding-left:8px;margin-right:8px}`,
 `<div class="row"><k-icon n="back" w="14" h="12"></k-icon><k-icon n="fwd" w="14" h="12" style="color:#84858a"></k-icon><k-icon n="reload" w="15"></k-icon><k-icon n="home" w="16" style="margin-left:-1px"></k-icon>
 <div class="url"><div class="chip"><k-icon n="firefox" w="16"></k-icon><fit-text w="48">Firefox</fit-text></div><fit-text w="183">about:preferences#privacy</fit-text><k-icon n="star" w="16" style="margin:0 6px 0 auto"></k-icon></div>
 <k-icon n="pocket" w="14"></k-icon><k-icon n="down" w="14" h="15"></k-icon><k-icon n="account" w="15"></k-icon><k-icon n="puzzle" w="14" h="16" style="margin-left:-1px"></k-icon><k-icon n="menu" w="12"></k-icon></div>`);

define('ff-bookmarks', `:host{height:31px;background:#43454c;color:#f0f0f2;--dy:-1px}
 .row{display:grid;height:32px;align-items:center;padding-left:10px;grid-template-columns:20px 56px 20px 74px 20px 77px 18px 72px 20px 89px 20px 109px 20px 83px 20px 130px}`,
 `<div class="row"><k-icon n="offsec" w="15"></k-icon><fit-text w="43.500">OffSec</fit-text><k-icon n="dragon" w="16"></k-icon><fit-text w="62">Kali Linux</fit-text><k-icon n="tools" w="15"></k-icon><fit-text w="63">Kali Tools</fit-text><k-icon n="docs" w="12" h="15"></k-icon><fit-text w="60">Kali Docs</fit-text><k-icon n="forums" w="16" h="15"></k-icon><fit-text w="77">Kali Forums</fit-text><k-icon n="nethunter" w="16" h="15"></k-icon><fit-text w="97">Kali NetHunter</fit-text><k-icon n="bug" w="15" h="12"></k-icon><fit-text w="71">Exploit-DB</fit-text><k-icon n="bug" w="15" h="12"></k-icon><fit-text w="126">Google Hacking DB</fit-text></div>`);

define('nav-item', `:host{display:flex;align-items:center;height:48px;gap:9px;color:#838385;font-size:16px}`, `<slot></slot>`);

define('ff-settings', `:host{height:503px;background:#0e0e10;position:relative;overflow:hidden}
 nav{padding:72px 0 0 44px;width:266px}
 .sm{height:38px;font-size:14px;padding-left:3px;gap:14px;--dy:-1px}
 .gap{height:32px}
 .peek{display:flex;position:absolute;left:266px;top:21px;gap:16px}
 .a{width:417px;height:10px;background:#1b1b1e;border-radius:4px}.b{width:231px;height:10px;border:1px solid #3f3f43;border-radius:4px}
 .https{position:absolute;left:266px;top:485px;color:#57575a;font-size:15px;line-height:18px}
 cert-dialog{position:absolute;left:266px;top:26px}`,
 `<nav><nav-item><k-icon n="gear" w="24"></k-icon><fit-text w="56">General</fit-text></nav-item><nav-item><k-icon n="home" w="23"></k-icon><fit-text w="43" style="margin-left:1px">Home</fit-text></nav-item><nav-item><k-icon n="search" w="24"></k-icon><fit-text w="48">Search</fit-text></nav-item><nav-item style="color:#006c7c"><k-icon n="padlock" w="24"></k-icon><fit-text w="126">Privacy &amp; Security</fit-text></nav-item><nav-item><k-icon n="sync" w="24"></k-icon><fit-text w="33">Sync</fit-text></nav-item><nav-item><svg width="24" height="24" viewBox="0 0 24 24" style="flex:none"><rect width="24" height="24" fill="#838385"/><text x="12" y="18.500" text-anchor="middle" textLength="22" lengthAdjust="spacingAndGlyphs" font-family="DejaVu Serif,serif" font-weight="bold" font-size="23" fill="#0e0e10">m</text></svg><fit-text w="131">More from Mozilla</fit-text></nav-item>
 <div class="gap"></div><nav-item class="sm"><k-icon n="puzzle" w="14" h="16" style="margin-right:1px"></k-icon><fit-text w="128">Extensions &amp; Themes</fit-text></nav-item><nav-item class="sm" style="padding-left:2px"><k-icon n="help" w="16"></k-icon><fit-text w="92">Firefox Support</fit-text></nav-item></nav>
 <div class="peek"><div class="a"></div><div class="b"></div></div>
 <fit-text class="https" w="639">HTTPS provides a secure, encrypted connection between Firefox and the websites you visit. Most</fit-text><cert-dialog></cert-dialog>`);

define('cert-row', `:host{display:grid;height:30px;width:627px;align-items:center;grid-template-columns:304px 1fr;background:#23222b}
 :host([alt]){background:#2f2e38}
 .n{display:flex;align-items:center;gap:5px;padding-left:7.500px}:host([child]) .n{padding-left:37px}
 ::slotted(k-icon){margin-top:1px}`,
 `<div class="n"><slot></slot></div><div><slot name="d"></slot></div>`);

define('dialog-button', `:host{display:flex;align-items:center;justify-content:center;height:34px;border-radius:4px;background:#484752;color:#84838d;font-weight:600;font-size:15px}
 :host([on]){background:#53525e;color:#fbfbfe}`, `<slot></slot>`);

define('cert-dialog', `:host{width:669px;height:453px;background:#42414d;border-radius:7px;color:#fbfbfe;box-shadow:0 2px 8px #0008;--dy:-1px}
 header{display:grid;grid-template-columns:252px 390px 12px;height:41px;align-items:center;border-bottom:1px solid #62616c;font-weight:600}
 .tabs{display:grid;grid-template-columns:151px 205px 86px 70px 113px;margin:19px 0 0 14px;width:641px;height:40px;border-bottom:1px solid #62616c;padding-left:19px;line-height:36px;--dy:-2px}
 .act{color:#00ddff;border-bottom:2px solid #00ddff;width:113px;padding-left:20px;height:39px}
 .desc{margin:11px 0 0 14px;height:24px;line-height:22px}
 .tree{margin:0 0 0 14px;width:641px;height:225px;border:1px solid #85848e;border-radius:4px;background:#23222b;overflow:hidden}
 .head{display:grid;grid-template-columns:302px 304px 33px;height:30px;background:#32313a;border-bottom:2px solid #6f6e78;align-items:center;--dy:0px}
 .head>*{padding-left:9.500px}.head .s{border-left:1px solid #8a8993;height:20px;line-height:20px;padding-left:10px}
 .btns{display:flex;margin:6px 0 0 18px;gap:8px}
 .mark{position:absolute;left:235px;top:361px;width:104px;height:51px;border:4px solid #e11b1d}
 .ok{width:54px;height:35px;margin:8px 14px 0 auto;background:#00ddff;color:#24232c}
 .grip{position:absolute;right:0;bottom:0}
 u{text-underline-offset:2px;text-decoration-thickness:1px}`,
 `<header><span></span><fit-text w="136">Certificate Manager</fit-text><k-icon n="close" w="12"></k-icon></header>
 <div class="tabs"><fit-text w="111">Your Certificates</fit-text><fit-text w="165">Authentication Decisions</fit-text><fit-text w="46">People</fit-text><fit-text w="50">Servers</fit-text><div class="act"><fit-text w="73">Authorities</fit-text></div></div>
 <div class="desc"><fit-text w="449.500">You have certificates on file that identify these certificate authorities</fit-text></div>
 <div class="tree"><div class="head"><div><fit-text w="113">Certificate Name</fit-text></div><div class="s"><fit-text w="101">Security Device</fit-text></div><div class="s" style="padding:5px 0 0 11px"><k-icon n="cols" w="11"></k-icon></div></div>
 <cert-row><k-icon n="chev" w="9" h="5.500"></k-icon><fit-text w="38">ACCV</fit-text></cert-row>
 <cert-row alt child><fit-text w="77">ACCVRAIZ1</fit-text><fit-text slot="d" w="134.500">Builtin Object Token</fit-text></cert-row>
 <cert-row><k-icon n="chev" w="9" h="5.500"></k-icon><fit-text w="185">Actalis S.p.A./03358520967</fit-text></cert-row>
 <cert-row alt child><fit-text w="204">Actalis Authentication Root CA</fit-text><fit-text slot="d" w="134.500">Builtin Object Token</fit-text></cert-row>
 <cert-row><k-icon n="chev" w="9" h="5.500"></k-icon><fit-text w="77.500">AffirmTrust</fit-text></cert-row>
 <cert-row alt child><fit-text w="162">AffirmTrust Commercial</fit-text><fit-text slot="d" w="134.500">Builtin Object Token</fit-text></cert-row>
 <cert-row child><fit-text w="159">AffirmTrust Networking</fit-text><fit-text slot="d" w="134.500">Builtin Object Token</fit-text></cert-row></div>
 <div class="btns"><dialog-button style="width:94px"><fit-text w="49">​<u>V</u>iew…</fit-text></dialog-button><dialog-button style="width:114px"><fit-text w="82"><u>E</u>dit Trust…</fit-text></dialog-button><dialog-button on style="width:94px"><fit-text w="62">I<u>m</u>port…</fit-text></dialog-button><dialog-button style="width:95px"><fit-text w="61">E<u>x</u>port…</fit-text></dialog-button><dialog-button style="width:170px"><fit-text w="137"><u>D</u>elete or Distrust…</fit-text></dialog-button></div>
 <dialog-button class="ok"><fit-text w="21">OK</fit-text></dialog-button><k-icon class="grip" n="grip" w="9"></k-icon><div class="mark"></div>`);

define('vm-status', `:host{height:16px;background:#f0f0f0;color:#111;overflow:hidden;font:11.500px "Noto Sans",sans-serif}
 .row{display:grid;grid-template-columns:19px 19px 19px 20px 18px 18px 20px 19px 19px 19px 18px 60px 10px;padding:3px 0 0 928px;line-height:13px}
 fit-text{--dy:1px;margin-top:-1px;height:13px}`,
 `<div class="row">${[1,2,3,4,5,6,7,8,9,10,11].map(i=>`<k-icon n="s${i}" w="15" h="14"></k-icon>`).join('')}<fit-text w="46">Right Ctrl</fit-text></div>`);

define('win-taskbar', `:host{height:44px;background:#dcdcdc;border-top:1px solid #b4b4b4;color:#1b1b1b;font:12px "Open Sans",sans-serif}
 .row{display:grid;height:43px;align-items:center;padding:3px 0 0 20px;grid-template-columns:30px 246px 37px 231px 44px 43px 45px 44px 44px 44px 43px 40px 42px 48px 48px 109px 30px 17px}
 .st{position:relative}.badge{position:absolute;left:10px;top:-6px;width:16px;height:16px;border-radius:50%;background:#c42b1c;color:#fff;font:600 11px/16px "Open Sans";text-align:center}
 .q{display:flex;align-items:center;width:219px;height:31px;border-radius:16px;background:#f6f6f6;border:1px solid #cfcfcf;padding:0 4px 0 10px;font-size:13.500px;color:#5a5a5a;margin-top:-1px}
 .t{line-height:16px}.r{color:#c42b1c}
 .app{position:relative;display:flex;justify-content:center;width:38px;height:39px;align-items:center;margin-top:-3px}
 .app::after{content:"";position:absolute;bottom:1px;width:6px;height:3px;border-radius:2px;background:#868686}
 .on{background:#f1f1f1;border-radius:4px}.on::after{width:12px;background:#0a78d6}.wide::after{width:14px}`,
 `<div class="row"><div class="st"><k-icon n="stocks" w="22"></k-icon><div class="badge">9</div></div><div class="t"><fit-text w="28">DOW</fit-text><fit-text class="r" w="37">-0.49%</fit-text></div><k-icon n="win" w="23"></k-icon>
 <div class="q"><k-icon n="search" w="15" style="color:#222"></k-icon><fit-text w="41" style="margin:0 auto 0 10px">Search</fit-text><k-icon n="tiger" w="45" h="25" style="margin-right:2px"></k-icon></div>
 <k-icon n="taskview" w="24" h="23"></k-icon><k-icon n="edge" w="24"></k-icon><k-icon n="wfolder" w="25" h="22"></k-icon><k-icon n="store" w="23" h="24"></k-icon><k-icon n="copilot" w="24"></k-icon><k-icon n="cortana" w="24"></k-icon><k-icon n="teams" w="24"></k-icon><k-icon n="chrome" w="24"></k-icon><div class="app" style="margin-left:-3px"><k-icon n="vbox" w="21" h="24"></k-icon></div><div class="app on"><k-icon n="vmlogo" w="24"></k-icon></div><div class="app" style="margin-left:-4px"><k-icon n="photos" w="22"></k-icon></div><div class="app wide" style="margin-left:-8px"><k-icon n="snip" w="24" style="margin-top:5px"></k-icon></div><k-icon n="chev" w="11" h="6" style="transform:rotate(180deg)"></k-icon><k-icon n="wifi" w="17" h="13" style="margin-left:-2px"></k-icon></div>`);

define('vm-window', `:host{width:1202px;height:760px;overflow:hidden}`,
 `<vm-titlebar></vm-titlebar><vm-menubar></vm-menubar><kali-panel></kali-panel><ff-tabs></ff-tabs><ff-toolbar></ff-toolbar><ff-bookmarks></ff-bookmarks><ff-settings></ff-settings><vm-status></vm-status><win-taskbar></win-taskbar>`);
</script>
</body>
</html>
